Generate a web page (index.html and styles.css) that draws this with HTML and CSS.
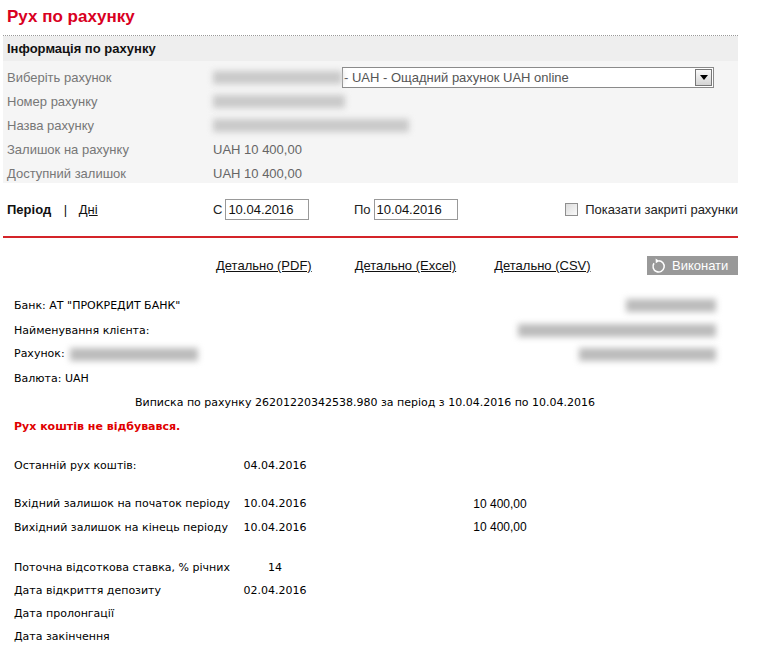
FILE: index.html
```
<!DOCTYPE html>
<html lang="uk">
<head>
    <meta charset="UTF-8">
    <title>Рух по рахунку</title>
    <link rel="stylesheet" href="styles.css">
</head>
<body>
    <div class="page">
        <h1 class="title">Рух по рахунку</h1>

        <div class="info">
            <div class="info-head">Інформація по рахунку</div>
            <div class="info-body">
                <div class="info-row">
                    <span class="label">Виберіть рахунок</span>
                    <span class="blur" style="width:129px"></span>
                    <div class="select">
                        <span class="select-text">- UAH - Ощадний рахунок UAH online</span>
                        <span class="select-btn"><svg width="8" height="5" viewBox="0 0 8 5"><polygon points="0,0 8,0 4,5" fill="#000"/></svg></span>
                    </div>
                </div>
                <div class="info-row">
                    <span class="label">Номер рахунку</span>
                    <span class="blur" style="width:132px"></span>
                </div>
                <div class="info-row">
                    <span class="label">Назва рахунку</span>
                    <span class="blur" style="width:196px"></span>
                </div>
                <div class="info-row">
                    <span class="label">Залишок на рахунку</span>
                    <span class="value">UAH 10 400,00</span>
                </div>
                <div class="info-row">
                    <span class="label">Доступний залишок</span>
                    <span class="value">UAH 10 400,00</span>
                </div>
            </div>
        </div>

        <div class="period">
            <div class="period-tabs">
                <b>Період</b>
                <span class="sep">|</span>
                <a href="#">Дні</a>
            </div>
            <div class="date-field">
                <span>С</span>
                <input type="text" class="date" value="10.04.2016">
            </div>
            <div class="date-field">
                <span>По</span>
                <input type="text" class="date" value="10.04.2016">
            </div>
            <label class="closed">
                <span class="check"></span>
                Показати закриті рахунки
            </label>
        </div>

        <div class="actions">
            <a href="#" class="pdf">Детально (PDF)</a>
            <a href="#" class="excel">Детально (Excel)</a>
            <a href="#" class="csv">Детально (CSV)</a>
            <button class="run">
                <svg width="16" height="16" viewBox="0 0 16 16">
                    <path d="M7.5 2.8 A5.6 5.6 0 1 1 3 5.2" fill="none" stroke="#fff" stroke-width="1.5"/>
                    <polygon points="4.6,0.6 8.4,2.9 4.8,5.2" fill="#fff"/>
                </svg>
                Виконати
            </button>
        </div>

        <div class="statement">
            <div class="st-row first">
                <span>Банк: АТ "ПРОКРЕДИТ БАНК"</span>
                <span class="blur dark" style="width:90px"></span>
            </div>
            <div class="st-row">
                <span>Найменування клієнта:</span>
                <span class="blur dark" style="width:198px"></span>
            </div>
            <div class="st-row">
                <span>Рахунок: <span class="blur dark inline" style="width:128px"></span></span>
                <span class="blur dark" style="width:137px"></span>
            </div>
            <div class="st-row">
                <span>Валюта: UAH</span>
            </div>
            <div class="st-caption">Виписка по рахунку 26201220342538.980 за період з 10.04.2016 по 10.04.2016</div>
            <div class="st-empty">Рух коштів не відбувався.</div>

            <div class="grid">
                <span>Останній рух коштів:</span><span class="c">04.04.2016</span><span></span>
                <span></span><span></span><span></span>
                <span>Вхідний залишок на початок періоду</span><span class="c">10.04.2016</span><span class="amt">10 400,00</span>
                <span>Вихідний залишок на кінець періоду</span><span class="c">10.04.2016</span><span class="amt">10 400,00</span>
                <span></span><span></span><span></span>
                <span>Поточна відсоткова ставка, % річних</span><span class="c">14</span><span></span>
                <span>Дата відкриття депозиту</span><span class="c">02.04.2016</span><span></span>
                <span>Дата пролонгації</span><span class="c"></span><span></span>
                <span>Дата закінчення</span><span class="c"></span><span></span>
            </div>
        </div>
    </div>
</body>
</html>
```

FILE: styles.css
```
body {
    margin: 0;
    padding: 0;
    background: #fff;
    font-family: 'Liberation Sans', Arial, sans-serif;
    font-size: 13px;
    color: #333;
}

.page {
    width: 735px;
    margin-left: 3px;
}

.title {
    margin: 0;
    height: 35px;
    line-height: 34px;
    padding-left: 4px;
    font-size: 17px;
    font-weight: bold;
    color: #d9001f;
    border-bottom: 1px dotted #999;
}

.info-head {
    height: 25px;
    line-height: 26px;
    padding-left: 4px;
    background: #eeeeee;
    font-weight: bold;
    color: #111;
}

.info-body {
    background: #f5f5f5;
    padding: 4px 0 0;
    height: 118px;
}

.info-row {
    display: flex;
    align-items: center;
    height: 24px;
}

.info-row .label {
    width: 206px;
    padding-left: 4px;
    color: #777;
}

.info-row .value {
    color: #666;
}

.blur {
    display: inline-block;
    height: 13px;
    background: #c9c9c9;
    filter: blur(3px);
}

.blur.dark {
    background: #bbb;
}

.blur.inline {
    vertical-align: middle;
    margin-left: 2px;
}

.select {
    display: flex;
    align-items: center;
    width: 370px;
    height: 19px;
    border: 1px solid #8a8a8a;
    background: #fff;
}

.select-text {
    flex: 1;
    padding-left: 1px;
    color: #555;
}

.select-btn {
    display: flex;
    align-items: center;
    justify-content: center;
    width: 15px;
    height: 15px;
    margin-right: 1px;
    border: 1px solid #777;
    background: linear-gradient(#fafafa, #d4d4d4);
}

.period {
    display: flex;
    align-items: center;
    height: 53px;
    border-bottom: 2px solid #d42429;
    color: #222;
}

.period-tabs {
    width: 206px;
    padding-left: 4px;
    color: #111;
}

.period-tabs .sep {
    margin: 0 8px 0 9px;
}

.period-tabs a {
    color: #111;
}

.date-field {
    display: flex;
    align-items: center;
    gap: 3px;
    width: 141px;
}

.date {
    width: 78px;
    height: 17px;
    padding: 1px 2px;
    border: 1px solid #999;
    font-family: 'Liberation Sans', Arial, sans-serif;
    font-size: 13px;
    color: #111;
    margin: 0;
}

.closed {
    display: flex;
    align-items: center;
    gap: 7px;
    margin-left: auto;
    color: #222;
}

.check {
    width: 11px;
    height: 11px;
    border: 1px solid #8f8f8f;
    background: linear-gradient(135deg, #dcdcdc, #fafafa);
}

.actions {
    display: flex;
    align-items: center;
    height: 19px;
    padding-top: 18px;
}

.actions a {
    color: #111;
}

.actions .pdf { margin-left: 213px; }
.actions .excel { margin-left: 43px; }
.actions .csv { margin-left: 38px; }

.run {
    display: flex;
    align-items: center;
    gap: 5px;
    margin-left: auto;
    width: 91px;
    height: 19px;
    padding: 0 0 0 4px;
    border: none;
    background: #999;
    color: #fff;
    font-family: 'Liberation Sans', Arial, sans-serif;
    font-size: 13px;
}

.statement {
    font-family: 'DejaVu Sans', Tahoma, sans-serif;
    font-size: 11px;
    color: #000;
    padding: 17px 22px 0 11px;
}

.st-row {
    display: flex;
    justify-content: space-between;
    align-items: center;
    height: 24px;
}

.st-row.first {
    height: 26px;
}

.st-caption {
    text-align: center;
    height: 24px;
    line-height: 25px;
}

.st-empty {
    color: #e00000;
    font-weight: bold;
    height: 24px;
    line-height: 26px;
}

.grid {
    display: grid;
    grid-template-columns: 211px 100px 350px;
    grid-template-rows: 23px 15px 23px 24px 17px 23px 23px 23px 23px;
    align-items: center;
    margin-top: 16px;
    white-space: nowrap;
}

.grid .c {
    text-align: center;
}

.grid .amt {
    font-family: 'Liberation Sans', Arial, sans-serif;
    font-size: 12px;
    text-align: center;
}
```
